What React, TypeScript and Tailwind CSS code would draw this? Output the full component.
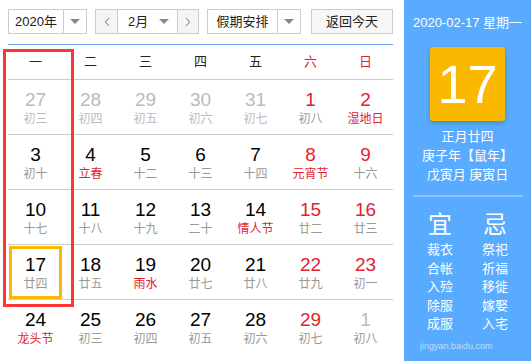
import { ChevronLeft, ChevronRight } from "lucide-react";

type Cell = { d: number; l: string; dim?: boolean; red?: boolean; lred?: boolean; today?: boolean };

const WEEK = ["一", "二", "三", "四", "五", "六", "日"];

const ROWS: Cell[][] = [
  [
    { d: 27, l: "初三", dim: true },
    { d: 28, l: "初四", dim: true },
    { d: 29, l: "初五", dim: true },
    { d: 30, l: "初六", dim: true },
    { d: 31, l: "初七", dim: true },
    { d: 1, l: "初八", red: true },
    { d: 2, l: "湿地日", red: true, lred: true },
  ],
  [
    { d: 3, l: "初十" },
    { d: 4, l: "立春", lred: true },
    { d: 5, l: "十二" },
    { d: 6, l: "十三" },
    { d: 7, l: "十四" },
    { d: 8, l: "元宵节", red: true, lred: true },
    { d: 9, l: "十六", red: true },
  ],
  [
    { d: 10, l: "十七" },
    { d: 11, l: "十八" },
    { d: 12, l: "十九" },
    { d: 13, l: "二十" },
    { d: 14, l: "情人节", lred: true },
    { d: 15, l: "廿二", red: true },
    { d: 16, l: "廿三", red: true },
  ],
  [
    { d: 17, l: "廿四", today: true },
    { d: 18, l: "廿五" },
    { d: 19, l: "雨水", lred: true },
    { d: 20, l: "廿七" },
    { d: 21, l: "廿八" },
    { d: 22, l: "廿九", red: true },
    { d: 23, l: "初一", red: true },
  ],
  [
    { d: 24, l: "龙头节", lred: true },
    { d: 25, l: "初三" },
    { d: 26, l: "初四" },
    { d: 27, l: "初五" },
    { d: 28, l: "初六" },
    { d: 29, l: "初七", red: true },
    { d: 1, l: "初八", dim: true },
  ],
];

const YI = ["裁衣", "合帐", "入殓", "除服", "成服"];
const JI = ["祭祀", "祈福", "移徙", "嫁娶", "入宅"];

function Caret() {
  return <span className="h-0 w-0 border-x-[5px] border-t-[5px] border-x-transparent border-t-[#888]" />;
}

export default function App() {
  return (
    <div
      className="flex h-[361px] w-[531px] overflow-hidden bg-white text-[#222]"
      style={{ fontFamily: '"Liberation Sans", "Noto Sans CJK SC", sans-serif' }}
    >
      <div className="relative w-[404px] shrink-0 pl-[8px] pr-[11px] pt-[9px]">
        {/* toolbar */}
        <div className="flex h-[25px] items-stretch text-[13px]">
          <div className="flex w-[79px] border border-[#ccc]">
            <div className="flex w-[55px] items-center justify-center border-r border-[#ccc]">2020年</div>
            <div className="flex flex-1 items-center justify-center"><Caret /></div>
          </div>
          <div className="ml-[8px] flex w-[104px] border border-[#ccc]">
            <div className="flex w-[22px] items-center justify-center border-r border-[#ccc] bg-[#f5f5f5] text-[#555]">
              <ChevronLeft size={14} strokeWidth={1.5} />
            </div>
            <div className="flex w-[60px] items-center justify-between border-r border-[#ccc] pl-[10px] pr-[8px]">
              <span>2月</span>
              <Caret />
            </div>
            <div className="flex flex-1 items-center justify-center bg-[#f5f5f5] text-[#555]">
              <ChevronRight size={14} strokeWidth={1.5} />
            </div>
          </div>
          <div className="ml-[8px] flex w-[94px] border border-[#ccc]">
            <div className="flex w-[70px] items-center justify-center border-r border-[#ccc]">假期安排</div>
            <div className="flex flex-1 items-center justify-center"><Caret /></div>
          </div>
          <div className="ml-[10px] flex w-[82px] items-center justify-center border border-[#ccc] bg-[#f7f7f7]">
            返回今天
          </div>
        </div>

        <div className="mt-[10px] h-px bg-[#66a6ee]" />

        {/* weekday header */}
        <div className="grid h-[34px] grid-cols-7 text-[13px]">
          {WEEK.map((w, i) => (
            <div key={w} className={`flex items-center justify-center ${i >= 5 ? "text-[#e0242f]" : ""}`}>
              {w}
            </div>
          ))}
        </div>

        {ROWS.map((row, ri) => (
          <div key={ri} className="grid h-[55px] grid-cols-7 border-t border-[#ccc]">
            {row.map((c, ci) => (
              <div key={ci} className="relative flex flex-col items-center pt-[9px]">
                {c.today && <div className="absolute inset-x-[1px] top-[1px] bottom-[0px] border-[3px] border-[#fbb800]" />}
                <div
                  className={`text-[19px] leading-[22px] ${
                    c.dim ? "text-[#bbb]" : c.red ? "text-[#e0242f]" : "text-black"
                  }`}
                >
                  {c.d}
                </div>
                <div
                  className={`text-[12px] leading-[16px] ${
                    c.lred ? "text-[#e0242f]" : c.dim && ci < 5 ? "text-[#bbb]" : "text-[#999]"
                  }`}
                >
                  {c.l}
                </div>
              </div>
            ))}
          </div>
        ))}

        {/* monday column highlight */}
        <div className="pointer-events-none absolute left-[3px] top-[49px] h-[258px] w-[71px] border-[3px] border-[#f33]" />
      </div>

      {/* side panel */}
      <div className="relative flex flex-1 flex-col items-center bg-[#58abfe] text-white">
        <div className="mt-[14px] text-[13px] leading-[18px]">2020-02-17 星期一</div>
        <div className="mt-[15px] flex h-[74px] w-[75px] items-center justify-center rounded-[3px] bg-[#fbb800] text-[54px] leading-none shadow-[0_2px_4px_rgba(0,0,0,0.2)]">
          17
        </div>
        <div className="mt-[6px] text-[13px] leading-[19px]">正月廿四</div>
        <div className="text-[13px] leading-[19px]">庚子年【鼠年】</div>
        <div className="text-[13px] leading-[19px]">戊寅月 庚寅日</div>
        <div className="mt-[11px] h-[2px] w-[110px] bg-[#8cc5ff]" />
        <div className="mt-[14px] flex w-[110px] justify-around">
          <div className="flex flex-col items-center">
            <div className="text-[24px] leading-[28px]">宜</div>
            <div className="mt-[2px] flex flex-col items-center text-[13px] leading-[18.5px]">
              {YI.map((t) => <div key={t}>{t}</div>)}
            </div>
          </div>
          <div className="flex flex-col items-center">
            <div className="text-[24px] leading-[28px]">忌</div>
            <div className="mt-[2px] flex flex-col items-center text-[13px] leading-[18.5px]">
              {JI.map((t) => <div key={t}>{t}</div>)}
            </div>
          </div>
        </div>
        <div className="pointer-events-none absolute left-[16px] top-[340px] text-[9px] text-white/60">jingyan.baidu.com</div>
      </div>
    </div>
  );
}
